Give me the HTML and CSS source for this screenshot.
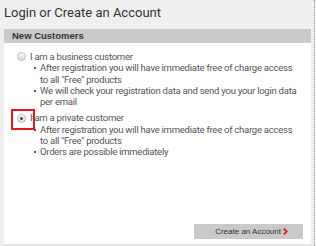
FILE: index.html
```html
<!DOCTYPE html>
<html lang="en">
  <head>
    <meta charset="UTF-8" />
    <title>Login or Create an Account</title>
    <link rel="stylesheet" href="styles.css">
  </head>
  <body>
    <div class="page">
      <div class="main">
        <h1 class="page-title">Login or Create an Account</h1>
        <div class="panel">
          <div class="panel-head">New Customers</div>
          <div class="panel-body">
            <div class="option">
              <label class="option-label">
                <span class="radio"></span>
                I am a business customer
              </label>
              <ul class="option-list">
                <li>After registration you will have immediate free of charge access <span class="keep">to all</span> "Free" products</li>
                <li>We will check your registration data and send you your login data per email</li>
              </ul>
            </div>
            <div class="option">
              <label class="option-label">
                <span class="marker"><span class="radio checked"></span></span>
                I am a private customer
              </label>
              <ul class="option-list">
                <li>After registration you will have immediate free of charge access <span class="keep">to all</span> "Free" products</li>
                <li>Orders are possible immediately</li>
              </ul>
            </div>
            <div class="actions">
              <button class="create-btn">
                Create an Account
                <svg class="chev" width="5" height="7" viewBox="0 0 5 7">
                  <path d="M0.8 0.6 L3.8 3.5 L0.8 6.4" fill="none" stroke="#e8151b" stroke-width="1.8" />
                </svg>
              </button>
            </div>
          </div>
        </div>
      </div>
    </div>
  </body>
</html>
```

FILE: styles.css
```css
* {
  margin: 0;
  padding: 0;
  box-sizing: border-box;
}

body {
  background: #efefef;
  font-family: Roboto, "Liberation Sans", sans-serif;
  color: #555;
}

.page {
  width: 315px;
  height: 246px;
  padding-left: 4px;
  padding-right: 3px;
  border-right: 1px dotted #9a9a9a;
}

.page-title {
  font-size: 13px;
  font-weight: 400;
  color: #333;
  height: 29px;
  padding-top: 5px;
}

.panel {
  background: #fff;
  border-bottom: 1px solid #e2e2e2;
}

.panel-head {
  background: #c9c9c9;
  height: 14px;
  line-height: 14px;
  padding-left: 8px;
  font-family: "Liberation Sans", Arial, sans-serif;
  font-size: 9.5px;
  font-weight: 700;
  color: #333;
}

.panel-body {
  height: 201px;
  display: flex;
  flex-direction: column;
  padding: 8px 8px 5px 13px;
  font-size: 9.5px;
  letter-spacing: -0.25px;
  line-height: 11.3px;
}

.keep {
  white-space: nowrap;
}

.option + .option {
  margin-top: 5px;
}

.option-label {
  display: flex;
  align-items: center;
  gap: 4px;
}

.radio {
  width: 9px;
  height: 9px;
  border-radius: 50%;
  border: 1px solid #b9b9b9;
  background: linear-gradient(#fdfdfd, #dcdcdc);
  position: relative;
}

.radio.checked::after {
  content: "";
  position: absolute;
  left: 2px;
  top: 2px;
  width: 3px;
  height: 3px;
  border-radius: 50%;
  background: #444;
}

.marker {
  position: relative;
  display: flex;
}

.marker::before {
  content: "";
  position: absolute;
  left: -6px;
  top: -5px;
  width: 20px;
  height: 17px;
  border: 2px solid #e8151b;
}

.option-list {
  list-style: none;
  padding-left: 23px;
}

.option-list li {
  position: relative;
}

.option-list li::before {
  content: "";
  position: absolute;
  left: -6px;
  top: 5px;
  width: 2px;
  height: 2px;
  background: #555;
}

.actions {
  margin-top: auto;
  display: flex;
  justify-content: flex-end;
}

.create-btn {
  width: 109px;
  height: 15px;
  border: none;
  background: #c9c9c9;
  font-family: "Liberation Sans", Arial, sans-serif;
  font-size: 8px;
  color: #333;
  text-align: right;
  padding-right: 22px;
  position: relative;
}

.chev {
  position: absolute;
  right: 15px;
  top: 4px;
}
```
